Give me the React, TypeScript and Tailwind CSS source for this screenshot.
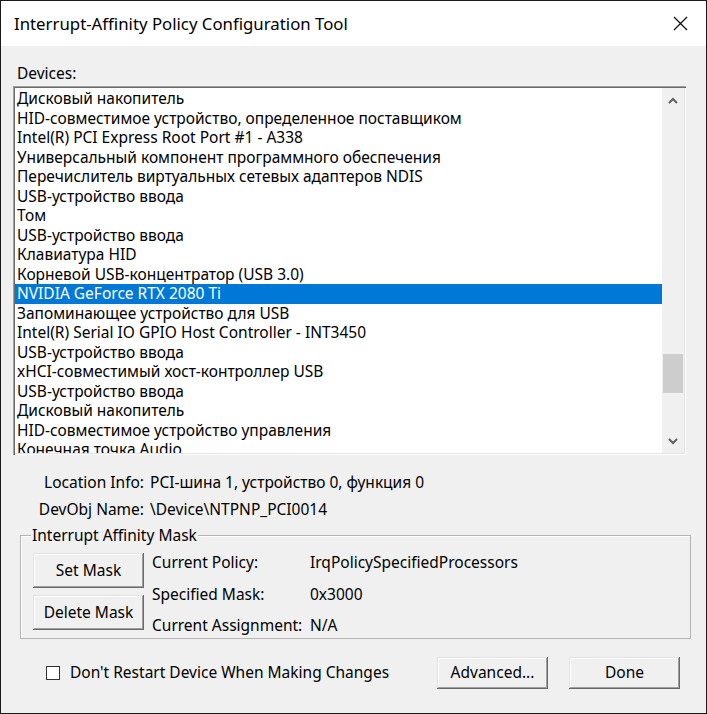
import React from "react";

const devices = [
  "Дисковый накопитель",
  "HID-совместимое устройство, определенное поставщиком",
  "Intel(R) PCI Express Root Port #1 - A338",
  "Универсальный компонент программного обеспечения",
  "Перечислитель виртуальных сетевых адаптеров NDIS",
  "USB-устройство ввода",
  "Том",
  "USB-устройство ввода",
  "Клавиатура HID",
  "Корневой USB-концентратор (USB 3.0)",
  "NVIDIA GeForce RTX 2080 Ti",
  "Запоминающее устройство для USB",
  "Intel(R) Serial IO GPIO Host Controller - INT3450",
  "USB-устройство ввода",
  "xHCI-совместимый хост-контроллер USB",
  "USB-устройство ввода",
  "Дисковый накопитель",
  "HID-совместимое устройство управления",
  "Конечная точка Audio",
];

const btn =
  "flex items-center justify-center bg-[#f0f0f0] text-black shadow-[inset_-1px_-1px_0_#696969,inset_1px_1px_0_#e3e3e3,inset_-2px_-2px_0_#a0a0a0,inset_2px_2px_0_#ffffff]";

export default function App() {
  return (
    <div
      className="w-[707px] h-[714px] border border-[#1a1a1a] bg-[#f0f0f0] flex flex-col text-[15.5px] text-black overflow-hidden"
      style={{ fontFamily: '"Noto Sans", "Liberation Sans", sans-serif' }}
    >
      {/* Title bar */}
      <div className="h-[45px] shrink-0 bg-white flex items-center pl-[13px] pr-[18px]">
        <span className="text-[16.8px] flex-1">Interrupt-Affinity Policy Configuration Tool</span>
        <svg width="15" height="15" viewBox="0 0 15 15">
          <path d="M1 1 L14 14 M14 1 L1 14" stroke="#000" strokeWidth="1.1" fill="none" />
        </svg>
      </div>

      {/* Devices label */}
      <div className="mt-[17px] ml-[16px] h-[20px] leading-[20px]">Devices:</div>

      {/* List box */}
      <div className="mt-[3px] ml-[12px] w-[673px] h-[369px] shrink-0 flex bg-white shadow-[inset_1px_1px_0_#a0a0a0,inset_2px_2px_0_#696969,inset_-1px_-1px_0_#ffffff,inset_-2px_-2px_0_#e3e3e3] p-[2px]">
        <div className="flex-1 overflow-hidden pt-[1px]">
          {devices.map((d, i) => (
            <div
              key={i}
              className={
                "h-[19.5px] leading-[19.5px] pl-[2px] whitespace-nowrap " +
                (i === 10 ? "bg-[#0078d7] text-white" : "")
              }
            >
              {d}
            </div>
          ))}
        </div>
        <div className="w-[22px] bg-[#f0f0f0] flex flex-col">
          <div className="h-[24px] flex items-center justify-center">
            <svg width="10" height="7" viewBox="0 0 10 7">
              <path d="M1 6 L5 2 L9 6" stroke="#606060" strokeWidth="2" fill="none" />
            </svg>
          </div>
          <div className="flex-1 flex flex-col">
            <div className="h-[242px]" />
            <div className="h-[39px] mx-[1px] bg-[#cdcdcd]" />
          </div>
          <div className="h-[24px] flex items-center justify-center">
            <svg width="10" height="7" viewBox="0 0 10 7">
              <path d="M1 1 L5 5 L9 1" stroke="#606060" strokeWidth="2" fill="none" />
            </svg>
          </div>
        </div>
      </div>

      {/* Info rows */}
      <div className="mt-[17px] grid grid-cols-[143px_1fr] gap-x-[6px] gap-y-[7px]">
        <div className="h-[20px] leading-[20px] text-right">Location Info:</div>
        <div className="h-[20px] leading-[20px]">PCI-шина 1, устройство 0, функция 0</div>
        <div className="h-[20px] leading-[20px] text-right">DevObj Name:</div>
        <div className="h-[20px] leading-[20px]">\Device\NTPNP_PCI0014</div>
      </div>

      {/* Group box */}
      <div className="relative mt-[16px] ml-[19px] w-[671px] h-[104px] shrink-0 border border-[#b4b4b4] shadow-[inset_1px_1px_0_#ffffff] flex pl-[12px] pt-[17px]">
        <span className="absolute left-[10px] top-[-11px] px-[1px] bg-[#f0f0f0] h-[20px] leading-[20px]">
          Interrupt Affinity Mask
        </span>
        <div className="flex flex-col gap-[7px]">
          <div className={btn + " w-[111px] h-[35px]"}>Set Mask</div>
          <div className={btn + " w-[111px] h-[35px]"}>Delete Mask</div>
        </div>
        <div className="ml-[8px] -mt-[1px] grid grid-cols-[158px_1fr] gap-y-[9px]">
          <div className="h-[20px] leading-[20px]">Current Policy:</div>
          <div className="h-[20px] leading-[20px]">IrqPolicySpecifiedProcessors</div>
          <div className="h-[20px] leading-[20px]">Specified Mask:</div>
          <div className="h-[20px] leading-[20px]">0x3000</div>
          <div className="h-[20px] leading-[20px] whitespace-nowrap">Current Assignment:</div>
          <div className="h-[20px] leading-[20px]">N/A</div>
        </div>
      </div>

      {/* Bottom row */}
      <div className="mt-[18px] flex items-center h-[32px]">
        <div className="ml-[45px] w-[14px] h-[14px] bg-white border border-[#333]" />
        <span className="ml-[10px]">Don't Restart Device When Making Changes</span>
        <div className={btn + " ml-auto w-[111px] h-[32px]"}>Advanced...</div>
        <div className={btn + " ml-[21px] mr-[26px] w-[111px] h-[32px]"}>Done</div>
      </div>
    </div>
  );
}
